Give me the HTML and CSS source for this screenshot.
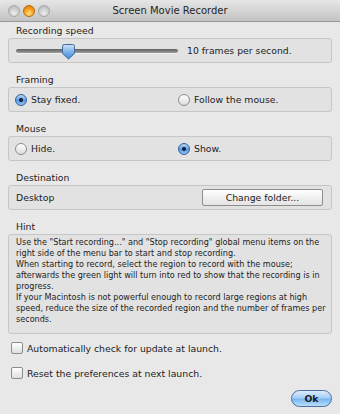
FILE: index.html
```html
<!DOCTYPE html>
<html lang="en">
<head>
  <meta charset="UTF-8">
  <meta name="viewport" content="width=device-width, initial-scale=1.0">
  <title>Screen Movie Recorder</title>
  <link rel="stylesheet" href="styles.css">
</head>
<body>

<div class="window">
  <div class="titlebar">
    <div class="lights">
      <span class="light"></span>
      <span class="light light-min"></span>
      <span class="light"></span>
    </div>
    <div class="title">Screen Movie Recorder</div>
    <div></div>
  </div>

  <div class="content">
    <div class="group">
      <div class="group-label">Recording speed</div>
      <div class="box box-speed">
        <div class="slider">
          <div class="track"></div>
          <svg class="knob" style="left: 32%;" width="13" height="16" viewBox="0 0 13 16">
            <defs>
              <linearGradient id="knobFill" x1="0" y1="0" x2="0" y2="1">
                <stop offset="0" stop-color="#cfe4fa"/>
                <stop offset="0.5" stop-color="#7fb3ea"/>
                <stop offset="1" stop-color="#3f86dd"/>
              </linearGradient>
            </defs>
            <path d="M2.5 0.5 H10.5 Q12.5 0.5 12.5 2.5 V9.5 L6.5 15 L0.5 9.5 V2.5 Q0.5 0.5 2.5 0.5 Z" fill="url(#knobFill)" stroke="#42679c" stroke-width="1"/>
          </svg>
        </div>
        <span class="speed-value">10 frames per second.</span>
      </div>
    </div>

    <div class="group">
      <div class="group-label">Framing</div>
      <div class="box box-radios">
        <label class="option"><span class="radio on"></span>Stay fixed.</label>
        <label class="option"><span class="radio"></span>Follow the mouse.</label>
      </div>
    </div>

    <div class="group">
      <div class="group-label">Mouse</div>
      <div class="box box-radios">
        <label class="option"><span class="radio"></span>Hide.</label>
        <label class="option"><span class="radio on"></span>Show.</label>
      </div>
    </div>

    <div class="group">
      <div class="group-label">Destination</div>
      <div class="box box-dest">
        <span>Desktop</span>
        <button class="push">Change folder...</button>
      </div>
    </div>

    <div class="group group-hint">
      <div class="group-label">Hint</div>
      <div class="box box-hint">
        <p>Use the "Start recording..." and "Stop recording" global menu items on the right side of the menu bar to start and stop recording.</p>
        <p>When starting to record, select the region to record with the mouse; afterwards the green light will turn into red to show that the recording is in progress.</p>
        <p>If your Macintosh is not powerful enough to record large regions at high speed, reduce the size of the recorded region and the number of frames per seconds.</p>
      </div>
    </div>

    <label class="check"><span class="checkbox"></span>Automatically check for update at launch.</label>
    <label class="check"><span class="checkbox"></span>Reset the preferences at next launch.</label>

    <div class="actions">
      <button class="ok">Ok</button>
    </div>
  </div>
</div>

</body>
</html>
```

FILE: styles.css
```css
body {
  margin: 0;
  background-color: #e8e8e8;
  font-family: "DejaVu Sans", sans-serif;
  font-size: 9.3px;
  color: #1c1c1c;
}

.window {
  width: 340px;
  height: 414px;
  background-color: #e8e8e8;
}

.titlebar {
  height: 21px;
  padding: 0 8px;
  display: grid;
  grid-template-columns: 1fr auto 1fr;
  align-items: center;
  background: linear-gradient(#e6e6e6, #c3c3c3);
  border-bottom: 1px solid #989898;
  border-radius: 5px 5px 0 0;
}

.lights {
  display: flex;
  gap: 3px;
}

.light {
  width: 12px;
  height: 12px;
  border-radius: 50%;
  box-sizing: border-box;
  border: 1px solid #a7a7a7;
  background: radial-gradient(circle at 50% 70%, #eeeeee, #c2c2c2 70%);
}

.light-min {
  border-color: #b86a10;
  background: radial-gradient(circle at 50% 75%, #ffe27a, #f59a1d 55%, #d8780a);
}

.title {
  font-size: 10px;
  color: #262626;
}

.content {
  padding: 3px 8px 0;
}

.group {
  margin-bottom: 11px;
}

.group-hint {
  margin-bottom: 0;
}

.group-label {
  line-height: 12px;
  padding-left: 8px;
  margin-bottom: 1px;
}

.box {
  box-sizing: border-box;
  height: 25px;
  border: 1px solid #c6c6c6;
  border-radius: 3px;
  background-color: #e2e2e2;
  display: flex;
  align-items: center;
}

.box-speed {
  padding-left: 7px;
}

.slider {
  position: relative;
  width: 162px;
  height: 16px;
  display: flex;
  align-items: center;
  margin-right: 9px;
}

.track {
  width: 100%;
  height: 4px;
  border-radius: 3px;
  background: linear-gradient(#5f5f5f, #9d9d9d);
  box-shadow: 0 1px 0 #f2f2f2;
}

.knob {
  position: absolute;
  top: 1px;
  margin-left: -6px;
}

.box-radios {
  display: grid;
  grid-template-columns: 163px 1fr;
  padding-left: 6px;
}

.option {
  display: flex;
  align-items: center;
  gap: 4px;
}

.radio {
  width: 12px;
  height: 12px;
  box-sizing: border-box;
  border-radius: 50%;
  border: 1px solid #8c8c8c;
  background: linear-gradient(#ffffff, #dcdcdc);
}

.radio.on {
  border-color: #3a5f96;
  background: radial-gradient(circle, #182744 0 1.6px, transparent 2.4px), linear-gradient(#b8d6f5, #5a9de6 55%, #8cc2f5);
}

.box-dest {
  justify-content: space-between;
  padding: 0 8px 0 7px;
}

.push {
  width: 121px;
  height: 17px;
  padding: 0;
  font-family: inherit;
  font-size: 9.3px;
  color: #1c1c1c;
  border: 1px solid #8e8e8e;
  border-radius: 2px;
  background: linear-gradient(#ffffff, #f0f0f0 50%, #e4e4e4);
}

.box-hint {
  display: block;
  height: 100px;
  padding: 2px 2px 0 7px;
  font-size: 8.1px;
  line-height: 11px;
}

.box-hint p {
  margin: 0;
}

.check {
  display: flex;
  align-items: center;
  gap: 4px;
  margin: 7px 0 0 3px;
  height: 14px;
}

.check + .check {
  margin-top: 11px;
}

.checkbox {
  width: 12px;
  height: 12px;
  box-sizing: border-box;
  border: 1px solid #8c8c8c;
  border-radius: 2px;
  background: linear-gradient(#ffffff, #dedede);
}

.actions {
  display: flex;
  justify-content: flex-end;
  margin-top: 10px;
}

.ok {
  width: 41px;
  height: 17px;
  padding: 0;
  font-family: inherit;
  font-size: 9.3px;
  font-weight: bold;
  color: #1a1a1a;
  border: 1px solid #4b6f9f;
  border-radius: 9px;
  background: linear-gradient(#dcecfc, #a6cff5 45%, #7ab7f0 55%, #b9defb);
}
```
